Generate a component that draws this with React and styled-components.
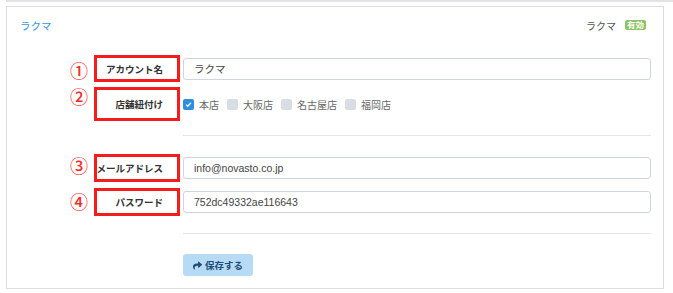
import styled, { createGlobalStyle } from "styled-components";
import { FaShare } from "react-icons/fa";

const GlobalStyle = createGlobalStyle`
  body {
    margin: 0;
    background: #fff;
    font-family: "Liberation Sans", "Noto Sans CJK JP", sans-serif;
  }
`;

const Page = styled.div`
  padding-left: 6px;
  width: 667px;
`;

const TopRule = styled.div`
  height: 2px;
  background: #e2e3e9;
`;

const Card = styled.div`
  margin-top: 4px;
  width: 656px;
  height: 281px;
  border: 1px solid #dcdde3;
  display: flex;
  flex-direction: column;
`;

const Header = styled.div`
  height: 36px;
  display: flex;
  align-items: center;
  justify-content: space-between;
  padding: 0 17px 0 13px;
`;

const ShopLink = styled.a`
  color: #3597dc;
  font-size: 10.5px;
  text-decoration: none;
`;

const Status = styled.div`
  display: flex;
  align-items: center;
  gap: 9px;
  font-size: 10px;
  color: #555;
`;

const Badge = styled.span`
  background: #8cc463;
  color: #fff;
  font-weight: bold;
  font-size: 8.5px;
  line-height: 10px;
  padding: 0 2px;
  border-radius: 2px;
`;

const Form = styled.div`
  margin-top: 12px;
  display: flex;
  flex-direction: column;
`;

const Row = styled.div`
  display: flex;
  align-items: center;
  padding-left: 57px;
  padding-right: 12px;
  margin-top: ${(p) => p.$gap || 0}px;
`;

const Num = styled.span`
  width: 30px;
  align-self: flex-start;
  margin-top: ${(p) => p.$top}px;
  text-align: center;
  color: #f42a2a;
  font-family: "Noto Sans CJK JP", sans-serif;
  font-size: 18px;
  font-weight: 500;
  line-height: 18px;
`;

const LabelBox = styled.div`
  box-sizing: border-box;
  width: 86px;
  height: ${(p) => p.$h}px;
  border: 3px solid #f51c1c;
  display: flex;
  align-items: center;
  justify-content: flex-end;
  padding-right: 14px;
  font-size: 9.5px;
  font-weight: bold;
  color: #333;
  white-space: nowrap;
`;

const Field = styled.div`
  flex: 1;
  margin-left: 3px;
  display: flex;
  align-items: center;
`;

const Input = styled.input`
  box-sizing: border-box;
  width: 100%;
  height: 22px;
  border: 1px solid #cdd6e0;
  border-radius: 3px;
  padding: 0 10px;
  font-family: "Liberation Sans", "Noto Sans CJK JP", sans-serif;
  font-size: 10.5px;
  color: #444;
  background: #fff;
  outline: none;
`;

const CheckItem = styled.label`
  display: flex;
  align-items: center;
  gap: 5px;
  margin-right: 8px;
  font-size: 10px;
  color: #666;
`;

const Box = styled.span`
  width: 11px;
  height: 11px;
  border-radius: 2px;
  background: ${(p) => (p.$on ? "#2e8fe0" : "#d8dde3")};
  display: flex;
  align-items: center;
  justify-content: center;
`;

const Divider = styled.div`
  height: 1px;
  background: #e3e5ea;
  margin: ${(p) => p.$m} 12px 0 176px;
`;

const Actions = styled.div`
  margin: 20px 0 0 176px;
`;

const SaveButton = styled.button`
  width: 70px;
  height: 22px;
  border: none;
  border-radius: 3px;
  background: #b8dbf5;
  color: #1d4d78;
  font-family: "Liberation Sans", "Noto Sans CJK JP", sans-serif;
  font-size: 9.5px;
  font-weight: bold;
  display: flex;
  align-items: center;
  justify-content: center;
  gap: 3px;
  padding: 0;
`;

const stores = [
  { name: "本店", on: true },
  { name: "大阪店", on: false },
  { name: "名古屋店", on: false },
  { name: "福岡店", on: false },
];

const Check = () => (
  <svg width="7" height="7" viewBox="0 0 8 8">
    <path d="M1.3 4.2 L3.2 6 L6.8 2" fill="none" stroke="#fff" strokeWidth="1.4" />
  </svg>
);

const App = () => {
  return (
    <Page>
      <GlobalStyle />
      <TopRule />
      <Card>
        <Header>
          <ShopLink href="#">ラクマ</ShopLink>
          <Status>
            ラクマ
            <Badge>有効</Badge>
          </Status>
        </Header>
        <Form>
          <Row>
            <Num $top={6}>①</Num>
            <LabelBox $h={27}>アカウント名</LabelBox>
            <Field>
              <Input defaultValue="ラクマ" />
            </Field>
          </Row>
          <Row $gap={5}>
            <Num $top={0}>②</Num>
            <LabelBox $h={34}>店舗紐付け</LabelBox>
            <Field>
              {stores.map((s) => (
                <CheckItem key={s.name}>
                  <Box $on={s.on}>{s.on && <Check />}</Box>
                  {s.name}
                </CheckItem>
              ))}
            </Field>
          </Row>
          <Divider $m="14px" />
          <Row $gap={18}>
            <Num $top={2}>③</Num>
            <LabelBox $h={28}>メールアドレス</LabelBox>
            <Field>
              <Input defaultValue="info@novasto.co.jp" />
            </Field>
          </Row>
          <Row $gap={6}>
            <Num $top={4}>④</Num>
            <LabelBox $h={28}>パスワード</LabelBox>
            <Field>
              <Input defaultValue="752dc49332ae116643" />
            </Field>
          </Row>
          <Divider $m="17px" />
          <Actions>
            <SaveButton>
              <FaShare size={9} />
              保存する
            </SaveButton>
          </Actions>
        </Form>
      </Card>
    </Page>
  );
};

export default App;
